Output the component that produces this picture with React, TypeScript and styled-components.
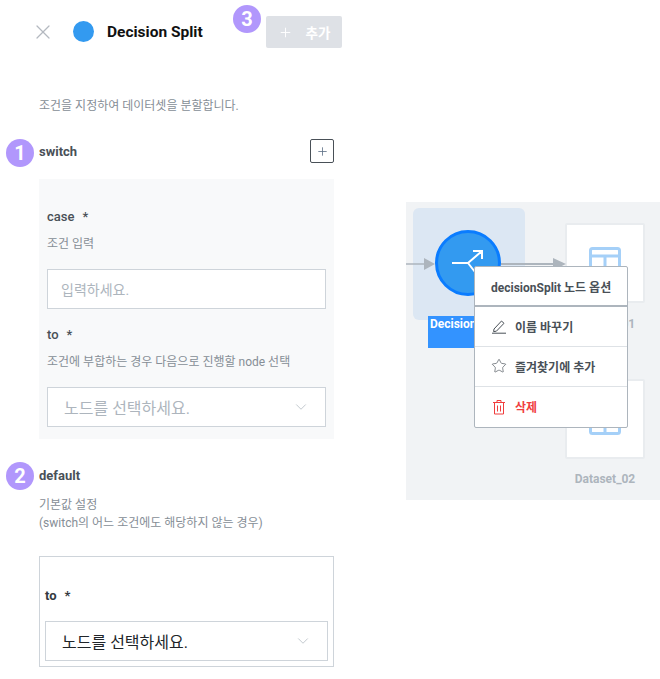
import React from 'react';
import styled, { createGlobalStyle } from 'styled-components';
import { ChevronDown, Plus, Star, X } from 'lucide-react';

const GlobalStyle = createGlobalStyle`
    html, body {
        margin: 0;
        padding: 0;
        background: white;
        font-family: Roboto, "Noto Sans CJK KR", sans-serif;
    }
    * {
        box-sizing: border-box;
    }
`;

const Page = styled.div`
    position: relative;
    width: 660px;
    height: 679px;
    overflow: hidden;
    display: grid;
    grid-template-columns: 406px 254px;
`;

const Side = styled.div`
    display: flex;
    flex-direction: column;
    padding-left: 39px;
    width: 342px;
`;

const Header = styled.div`
    display: flex;
    align-items: center;
    height: 32px;
    margin-top: 16px;
    margin-left: -8px;
    color: #b4b9c0;
`;

const Dot = styled.div`
    width: 21px;
    height: 21px;
    border-radius: 50%;
    background: #339af0;
    margin: -1px 0 0 18px;
`;

const Title = styled.h1`
    margin: 0 0 0 13px;
    width: 159px;
    font-size: 15.5px;
    font-weight: 700;
    color: #111;
`;

const AddButton = styled.button`
    width: 76px;
    height: 32px;
    border: 0;
    border-radius: 2px;
    background: #dee1e6;
    color: white;
    display: flex;
    align-items: center;
    justify-content: center;
    gap: 13px;
    font: 700 13.5px Roboto, "Noto Sans CJK KR", sans-serif;
    padding: 0;
`;

const Description = styled.p`
    margin: 50px 0 0;
    font-size: 12px;
    line-height: 16px;
    color: #868e96;
`;

const SectionRow = styled.div<{ $top: number }>`
    display: flex;
    align-items: center;
    justify-content: space-between;
    width: 295px;
    height: 24px;
    margin-top: ${({ $top }) => $top}px;
`;

const SectionName = styled.span`
    font-size: 13px;
    font-weight: 700;
    color: #495057;
`;

const SquareButton = styled.div`
    width: 24px;
    height: 24px;
    border: 1px solid #495057;
    border-radius: 2px;
    display: flex;
    align-items: center;
    justify-content: center;
    color: #5c6f85;
`;

const Panel = styled.div`
    width: 295px;
    height: 260px;
    margin-top: 16px;
    background: #f8f9fa;
    padding: 29px 8px 0;
`;

const FieldLabel = styled.div<{ $top?: number; $bold?: boolean }>`
    font-size: 13px;
    line-height: 18px;
    color: ${({ $bold }) => ($bold ? '#343a40' : '#495057')};
    font-weight: ${({ $bold }) => ($bold ? 700 : 500)};
    margin-top: ${({ $top }) => $top ?? 0}px;
    span {
        margin-left: 8px;
    }
`;

const Hint = styled.div`
    margin-top: 9px;
    font-size: 12px;
    line-height: 18px;
    color: #868e96;
`;

const FieldBox = styled.div<{ $wide?: boolean }>`
    width: ${({ $wide }) => ($wide ? 283 : 279)}px;
    height: 40px;
    margin-top: 16px;
    background: white;
    border: 1px solid #ced4da;
    display: flex;
    align-items: center;
    justify-content: space-between;
    padding: 0 15px 0 13px;
    color: #adb5bd;
    font-size: 14px;
`;

const SelectText = styled.span<{ $dark?: boolean }>`
    font-size: 16px;
    margin-left: 3px;
    color: ${({ $dark }) => ($dark ? '#212529' : '#adb5bd')};
`;

const DefaultHint = styled.div`
    margin-top: 9px;
    font-size: 12px;
    line-height: 18px;
    color: #868e96;
`;

const DefaultBox = styled.div`
    width: 295px;
    height: 111px;
    margin-top: 24px;
    border: 1px solid #ced4da;
    padding: 30px 5px 0;
`;

const Badge = styled.div<{ $x: number; $y: number }>`
    position: absolute;
    left: ${({ $x }) => $x}px;
    top: ${({ $y }) => $y}px;
    width: 28px;
    height: 28px;
    border-radius: 50%;
    background: #b197fc;
    color: white;
    font-size: 20px;
    font-weight: 700;
    display: flex;
    align-items: center;
    justify-content: center;
`;

const Canvas = styled.div`
    position: relative;
    align-self: start;
    margin-top: 202px;
    width: 254px;
    height: 298px;
    background: #f1f3f5;
`;

const NodeGlow = styled.div`
    position: absolute;
    left: 7px;
    top: 6px;
    width: 112px;
    height: 112px;
    border-radius: 6px;
    background: #dce7f3;
`;

const NodeCircle = styled.div`
    position: absolute;
    left: 29px;
    top: 28px;
    width: 66px;
    height: 66px;
    border-radius: 50%;
    background: #339af0;
    border: 3px solid #0a7cff;
    display: flex;
    align-items: center;
    justify-content: center;
`;

const NodeName = styled.div`
    position: absolute;
    left: 22px;
    top: 114px;
    width: 112px;
    height: 32px;
    background: #3393ff;
    color: white;
    font-size: 12px;
    font-weight: 700;
    line-height: 14px;
    padding: 1px 0 0 2px;
    overflow: hidden;
    white-space: nowrap;
`;

const DataNode = styled.div<{ $top: number }>`
    position: absolute;
    left: 159px;
    top: ${({ $top }) => $top}px;
    width: 80px;
    height: 80px;
    background: white;
    border: 2px solid #e9ecef;
    border-radius: 2px;
    display: flex;
    align-items: center;
    justify-content: center;
`;

const DataName = styled.div<{ $top: number }>`
    position: absolute;
    left: 159px;
    top: ${({ $top }) => $top}px;
    width: 80px;
    text-align: center;
    font-size: 12px;
    font-weight: 700;
    color: #adb5bd;
`;

const Wires = styled.svg`
    position: absolute;
    left: 0;
    top: 0;
`;

const Menu = styled.div`
    position: absolute;
    left: 474px;
    top: 266px;
    width: 154px;
    height: 162px;
    background: white;
    border: 1px solid #adb5bd;
    border-radius: 2px;
`;

const MenuTitle = styled.div`
    height: 40px;
    border-bottom: 2px solid #adb5bd;
    display: flex;
    align-items: center;
    padding-left: 16px;
    font-size: 12px;
    font-weight: 700;
    color: #495057;
`;

const MenuItem = styled.div<{ $danger?: boolean }>`
    height: 40px;
    display: flex;
    align-items: center;
    gap: 8px;
    padding-left: 16px;
    padding-bottom: 1px;
    font-size: 12px;
    font-weight: 700;
    color: ${({ $danger }) => ($danger ? '#f03e3e' : '#495057')};
    border-bottom: ${({ $danger }) => ($danger ? '0' : '1px solid #dee2e6')};
`;

const TableIcon = () => (
    <svg width="32" height="32" viewBox="0 0 32 32" fill="none" stroke="#a5d0f8" strokeWidth="3">
        <rect x="1.500" y="1.500" width="29" height="29" rx="2" />
        <path d="M1.500 9H30.500M16 9V30.500" />
    </svg>
);

const PencilIcon = () => (
    <svg width="16" height="16" viewBox="0 0 16 16" fill="none" stroke="#495057" strokeWidth="1">
        <path d="M3 11l7.500-8 2.500 2.300-7.600 7.900-2.800.4z" />
        <path d="M1 15.200h14" />
    </svg>
);

const TrashIcon = () => (
    <svg width="16" height="16" viewBox="0 0 16 16" fill="none" stroke="#f03e3e" strokeWidth="1">
        <path d="M2 3.500h12M6 3.500V1.500h4v2M3.500 3.500v11.500h9V3.500M6.500 6.500v6M9.500 6.500v6" />
    </svg>
);

const App = () => {
    return (
        <Page>
            <GlobalStyle />
            <Side>
                <Header>
                    <X size={24} strokeWidth={1.25} />
                    <Dot />
                    <Title>Decision Split</Title>
                    <AddButton>
                        <Plus size={15} strokeWidth={1.5} />
                        추가
                    </AddButton>
                </Header>
                <Description>조건을 지정하여 데이터셋을 분할합니다.</Description>
                <SectionRow $top={25}>
                    <SectionName>switch</SectionName>
                    <SquareButton>
                        <Plus size={13} strokeWidth={1.5} />
                    </SquareButton>
                </SectionRow>
                <Panel>
                    <FieldLabel>
                        case<span>*</span>
                    </FieldLabel>
                    <Hint>조건 입력</Hint>
                    <FieldBox>입력하세요.</FieldBox>
                    <FieldLabel $top={17}>
                        to<span>*</span>
                    </FieldLabel>
                    <Hint>조건에 부합하는 경우 다음으로 진행할 node 선택</Hint>
                    <FieldBox>
                        <SelectText>노드를 선택하세요.</SelectText>
                        <ChevronDown size={18} strokeWidth={1} />
                    </FieldBox>
                </Panel>
                <SectionRow $top={24}>
                    <SectionName>default</SectionName>
                </SectionRow>
                <DefaultHint>
                    기본값 설정
                    <br />
                    (switch의 어느 조건에도 해당하지 않는 경우)
                </DefaultHint>
                <DefaultBox>
                    <FieldLabel $bold>
                        to<span>*</span>
                    </FieldLabel>
                    <FieldBox $wide>
                        <SelectText $dark>노드를 선택하세요.</SelectText>
                        <ChevronDown size={18} strokeWidth={1} />
                    </FieldBox>
                </DefaultBox>
            </Side>
            <Canvas>
                <NodeGlow />
                <NodeName>Decision Split</NodeName>
                <DataNode $top={21}>
                    <TableIcon />
                </DataNode>
                <DataNode $top={177}>
                    <TableIcon />
                </DataNode>
                <DataName $top={115}>Dataset_01</DataName>
                <DataName $top={270}>Dataset_02</DataName>
                <NodeCircle>
                    <svg width="32" height="28" viewBox="0 0 32 28" fill="none" stroke="white" strokeWidth="2">
                        <path d="M0 14H16L30 2M21 2h9v8M16 14l7 9" />
                    </svg>
                </NodeCircle>
                <Wires width="254" height="298" fill="#adb5bd" stroke="#adb5bd">
                    <path d="M0 62H24" strokeWidth="1.500" />
                    <path d="M18 56l11 6-11 6z" stroke="none" />
                    <path d="M95 62H150" strokeWidth="2" />
                    <path d="M147 56l13 6-13 6z" stroke="none" />
                </Wires>
            </Canvas>
            <Badge $x={6} $y={139}>1</Badge>
            <Badge $x={6} $y={462}>2</Badge>
            <Badge $x={233} $y={5}>3</Badge>
            <Menu>
                <MenuTitle>decisionSplit 노드 옵션</MenuTitle>
                <MenuItem>
                    <PencilIcon />
                    이름 바꾸기
                </MenuItem>
                <MenuItem>
                    <Star size={16} strokeWidth={1} />
                    즐겨찾기에 추가
                </MenuItem>
                <MenuItem $danger>
                    <TrashIcon />
                    삭제
                </MenuItem>
            </Menu>
        </Page>
    );
};

export default App;
